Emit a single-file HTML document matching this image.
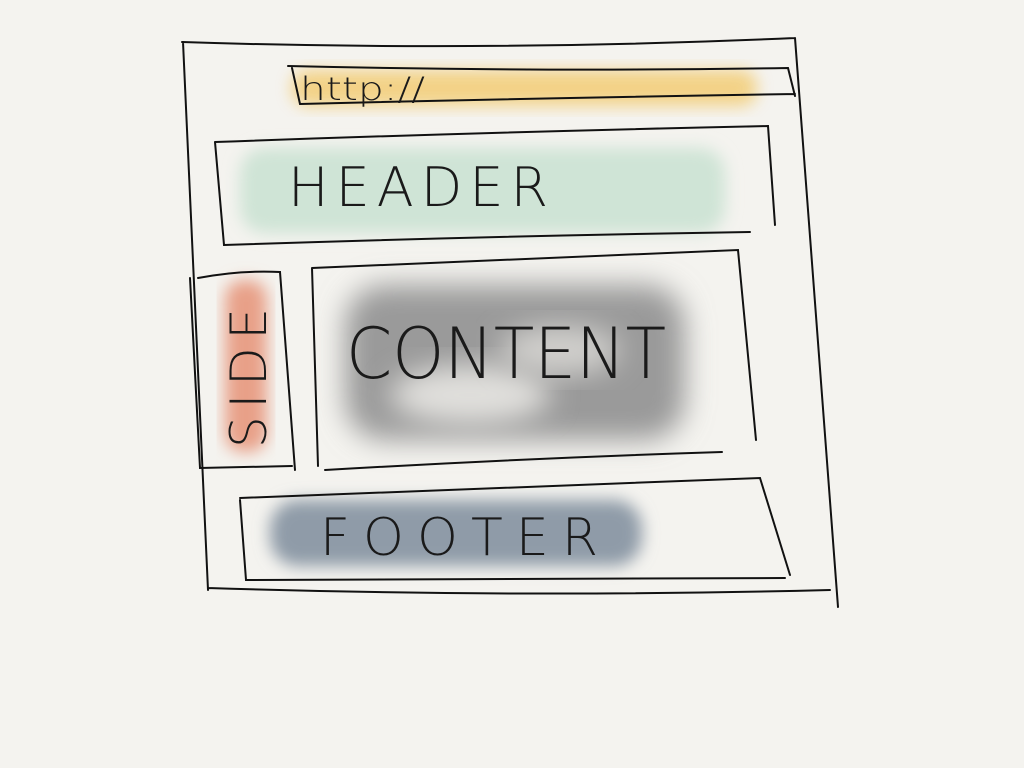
<!DOCTYPE html>
<html><head><meta charset="utf-8"><style>
html,body{margin:0;padding:0;background:#f4f3ef;}
svg{display:block}
text{font-family:"DejaVu Sans","Liberation Sans",sans-serif;font-weight:200;fill:#1a1a1a;stroke:none;}
</style></head><body>
<svg width="1024" height="768" viewBox="0 0 1024 768" xmlns="http://www.w3.org/2000/svg">
<defs>
<filter id="b" x="-20%" y="-30%" width="140%" height="160%"><feGaussianBlur stdDeviation="8"/></filter>
<filter id="b2" x="-20%" y="-30%" width="140%" height="160%"><feGaussianBlur stdDeviation="14"/></filter>
</defs>
<rect width="1024" height="768" fill="#f4f3ef"/>
<rect x="292" y="70" width="465" height="36" rx="16" fill="#f3cf7c" filter="url(#b)" opacity="0.9"/>
<rect x="240" y="148" width="485" height="85" rx="25" fill="#cfe4d6" filter="url(#b)"/>
<rect x="225" y="280" width="42" height="172" rx="18" fill="#e8a088" filter="url(#b)"/>
<rect x="345" y="285" width="340" height="155" rx="40" fill="#9a9a9a" filter="url(#b2)"/>
<ellipse cx="470" cy="395" rx="80" ry="30" fill="#e0dfdc" filter="url(#b2)"/>
<ellipse cx="560" cy="350" rx="60" ry="25" fill="#d0cfcc" filter="url(#b2)"/>
<rect x="270" y="500" width="372" height="66" rx="28" fill="#8f9ba8" filter="url(#b)"/>
<g fill="none" stroke="#111" stroke-width="2" stroke-linecap="round">
<path d="M182 42 Q480 52 795 38 M183 42 L208 590 M795 38 L838 607 M208 588 Q520 598 830 590"/>
<path d="M288 66 Q540 72 788 68 L795 96 M292 68 L300 104 Q540 98 795 94"/>
<path d="M215 142 Q490 132 768 126 L775 225 M215 142 L224 245 Q490 236 750 232"/>
<path d="M190 278 L200 468 L292 466 M198 278 Q240 270 280 272 L295 470"/>
<path d="M312 268 Q530 258 738 250 L756 440 M312 268 L318 466 M325 470 Q530 458 722 452"/>
<path d="M240 498 Q500 488 760 478 L790 575 M240 500 L246 580 Q520 578 785 578"/>
</g>
<text x="300" y="100" font-size="32" textLength="125" lengthAdjust="spacingAndGlyphs">http://</text>
<text x="288" y="206" font-size="54" textLength="260" lengthAdjust="spacing">HEADER</text>
<text x="346" y="378" font-size="70" textLength="320" lengthAdjust="spacingAndGlyphs">CONTENT</text>
<text x="320" y="555" font-size="52" textLength="278" lengthAdjust="spacing">FOOTER</text>
<text transform="translate(266,448) rotate(-90)" font-size="50" textLength="140" lengthAdjust="spacing">SIDE</text>
</svg>
</body></html>
